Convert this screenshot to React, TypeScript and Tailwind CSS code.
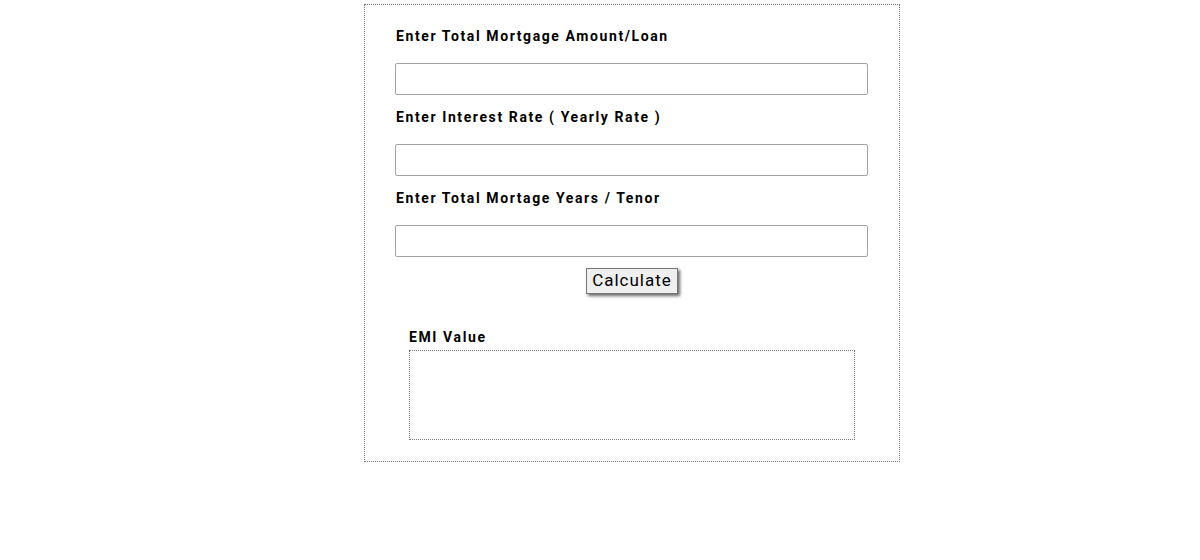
import React, { useState } from 'react';

const labelCls =
  "block text-[14px] leading-5 font-bold tracking-[1.6px] text-black";
const inputCls =
  "block w-[473px] -ml-px h-[32px] mt-[17px] mb-[12px] border border-[#a3a3a3] rounded-[2px] px-2 text-[14px] outline-none";

export default function App() {
  const [loan, setLoan] = useState('');
  const [rate, setRate] = useState('');
  const [years, setYears] = useState('');
  const [emi, setEmi] = useState('');

  const calculate = () => {
    const p = parseFloat(loan);
    const r = parseFloat(rate) / 12 / 100;
    const n = parseFloat(years) * 12;
    if (!p || !r || !n) return;
    const v = (p * r * Math.pow(1 + r, n)) / (Math.pow(1 + r, n) - 1);
    setEmi(v.toFixed(2));
  };

  return (
    <div className="min-h-[560px] bg-white font-['Roboto','Liberation_Sans',sans-serif]">
      <div className="ml-[364px] pt-[4px] w-[536px]">
        <div className="border border-dotted border-[#7a7a7a] px-[31px] pt-[21px] pb-[21px]">
          <label className={labelCls}>Enter Total Mortgage Amount/Loan</label>
          <input className={inputCls} value={loan} onChange={(e) => setLoan(e.target.value)} />
          <label className={labelCls}>Enter Interest Rate ( Yearly Rate )</label>
          <input className={inputCls} value={rate} onChange={(e) => setRate(e.target.value)} />
          <label className={labelCls}>Enter Total Mortage Years / Tenor</label>
          <input className={inputCls + " !mb-0"} value={years} onChange={(e) => setYears(e.target.value)} />
          <div className="flex justify-center mt-[11px]">
            <button
              onClick={calculate}
              className="h-[26px] w-[92px] bg-[#efefef] border border-[#767676] text-[17px] leading-none tracking-[1px] pb-[2px] text-black shadow-[2px_2px_3px_rgba(0,0,0,0.6)]"
            >
              Calculate
            </button>
          </div>
          <div className="px-[13px] mt-[33px]">
            <label className={labelCls}>EMI Value</label>
            <div className="mt-[3px] h-[90px] border border-dotted border-[#7a7a7a] p-2 text-[14px]">
              {emi}
            </div>
          </div>
        </div>
      </div>
    </div>
  );
}
